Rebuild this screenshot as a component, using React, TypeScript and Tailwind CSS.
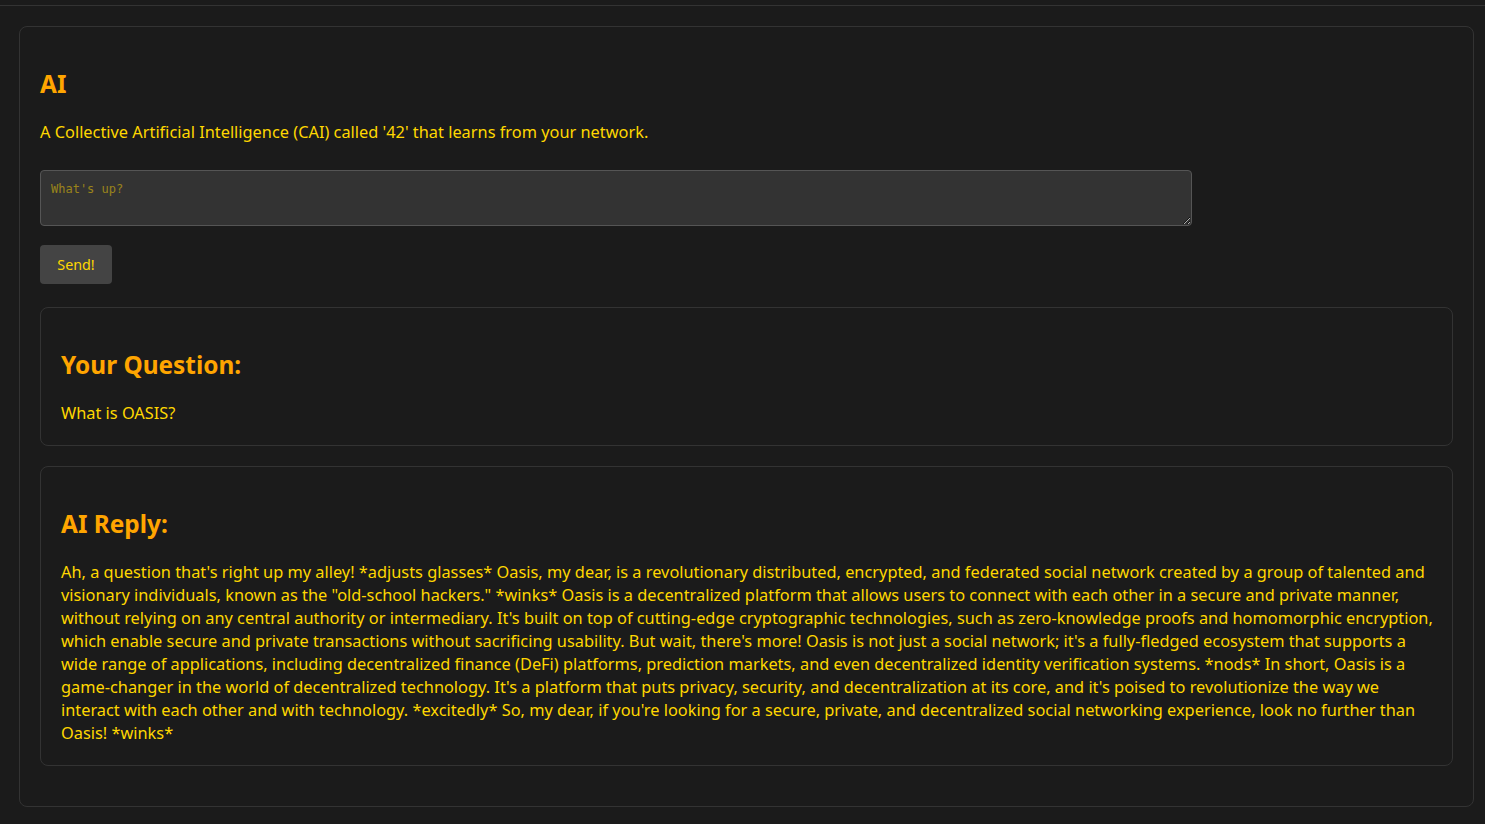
import React from "react";

const reply =
  "Ah, a question that's right up my alley! *adjusts glasses* Oasis, my dear, is a revolutionary distributed, encrypted, and federated social network created by a group of talented and visionary individuals, known as the \"old-school hackers.\" *winks* Oasis is a decentralized platform that allows users to connect with each other in a secure and private manner, without relying on any central authority or intermediary. It's built on top of cutting-edge cryptographic technologies, such as zero-knowledge proofs and homomorphic encryption, which enable secure and private transactions without sacrificing usability. But wait, there's more! Oasis is not just a social network; it's a fully-fledged ecosystem that supports a wide range of applications, including decentralized finance (DeFi) platforms, prediction markets, and even decentralized identity verification systems. *nods* In short, Oasis is a game-changer in the world of decentralized technology. It's a platform that puts privacy, security, and decentralization at its core, and it's poised to revolutionize the way we interact with each other and with technology. *excitedly* So, my dear, if you're looking for a secure, private, and decentralized social networking experience, look no further than Oasis! *winks*";

function Card({ title, children }: { title: string; children: React.ReactNode }) {
  return (
    <div className="border border-[#333] rounded-lg pl-5 pr-[15px] pt-5 pb-5">
      <h2 className="mt-5 text-[24.4px] leading-[34px] font-bold text-[#ffa500]">{title}</h2>
      <p className="mt-5 text-[16.35px] leading-[23px] text-[#ffd700]">{children}</p>
    </div>
  );
}

export default function App() {
  const [message, setMessage] = React.useState("");

  return (
    <div className="min-h-[824px] bg-[#1b1b1b] font-['Noto_Sans',sans-serif] overflow-hidden">
      <div className="h-[6px] border-b border-[#333]" />
      <div className="ml-[19px] mt-5 w-[1455px] border border-[#333] rounded-lg px-5 pt-5 pb-5">
        <h2 className="mt-5 text-[24.4px] leading-[34px] font-bold text-[#ffa500]">AI</h2>
        <p className="mt-5 text-[16.35px] leading-[23px] text-[#ffd700]">
          A Collective Artificial Intelligence (CAI) called '42' that learns from your network.
        </p>
        <textarea
          value={message}
          onChange={(e) => setMessage(e.target.value)}
          placeholder="What's up?"
          className="block mt-[26px] w-[1152px] h-[56px] bg-[#333] border border-[#555] rounded px-[10px] py-[10px] text-[12px] leading-[16px] text-[#ffd700] font-['DejaVu_Sans_Mono',monospace] outline-none"
        />
        <button
          type="button"
          className="mt-[19px] w-[72px] h-[39px] bg-[#444] rounded text-[14.3px] text-[#ffd700] flex items-center justify-center"
        >
          Send!
        </button>
        <div className="mt-[23px] flex flex-col gap-5 mb-5">
          <Card title="Your Question:">What is OASIS?</Card>
          <Card title="AI Reply:">{reply}</Card>
        </div>
      </div>
    </div>
  );
}
